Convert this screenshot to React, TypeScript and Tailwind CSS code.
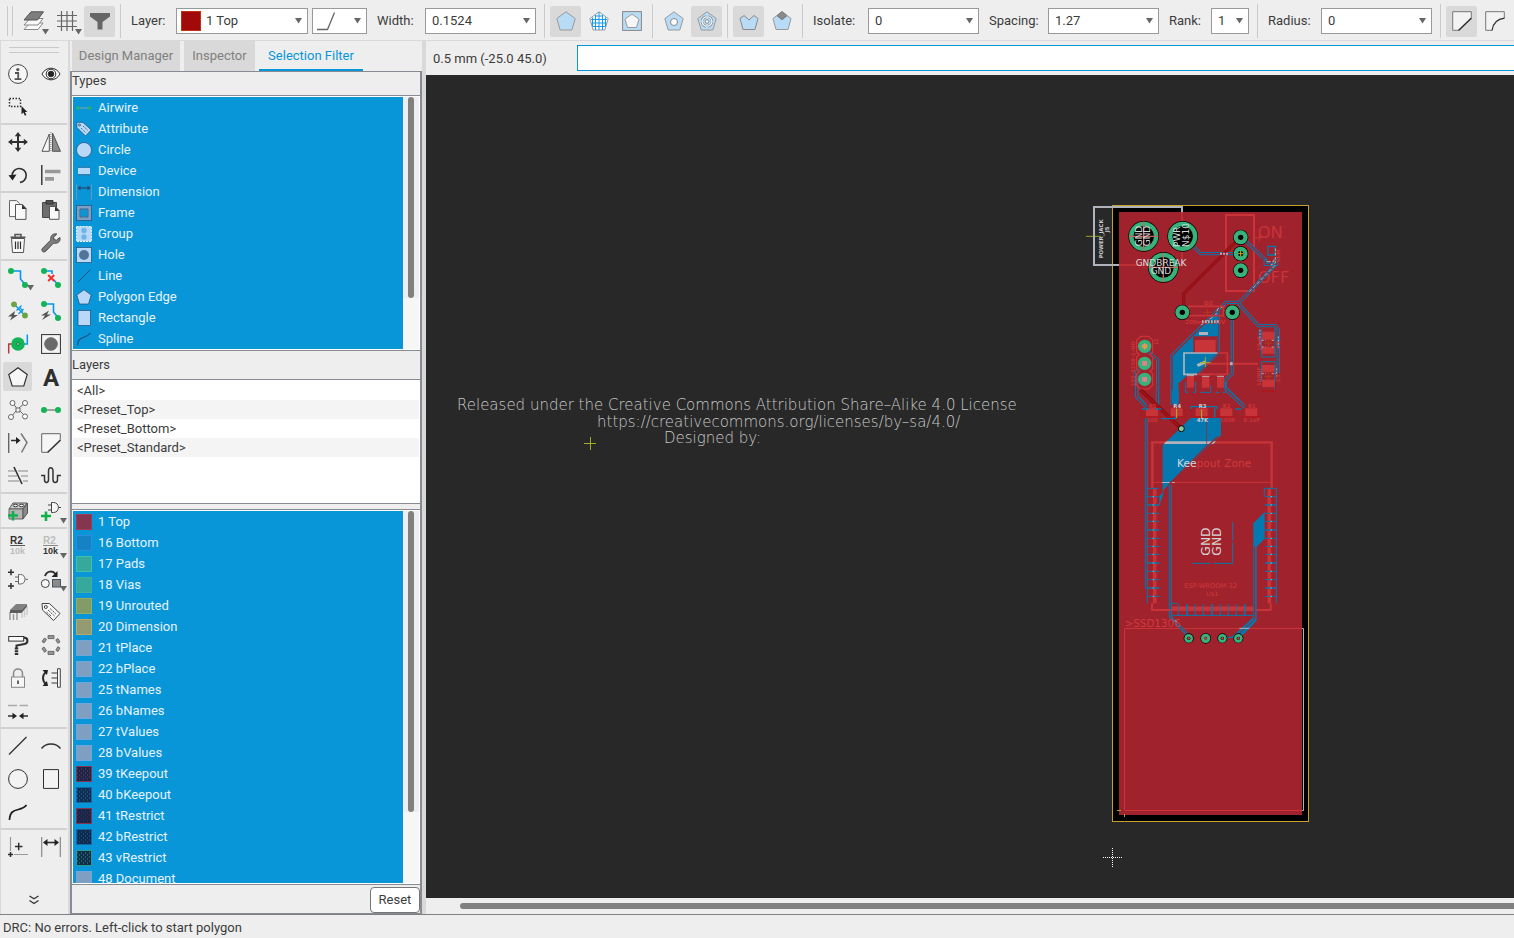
import type { ReactNode } from "react";

const GREEN = "#12b455";
const BLUE = "#0696ee";
const DARK = "#2f2f2f";

function Ico({ children, size = 20 }: { children: ReactNode; size?: number }) {
  return (
    <svg
      width={size}
      height={size}
      viewBox={`0 0 ${size} ${size}`}
      fill="none"
      stroke={DARK}
      className="overflow-visible"
      aria-hidden="true"
    >
      {children}
    </svg>
  );
}

function Arrow() {
  return (
    <svg width="7" height="6" viewBox="0 0 7 6" aria-hidden="true">
      <path d="M0 0h7L3.5 5.5z" fill="#666" />
    </svg>
  );
}

const pentagon = "M10 .8 19.2 7.6 15.8 19H4.2L.8 7.6z";
const tag = "M1 1.5 1.5 8 12.5 18.5 19 11.5 8.5 1.5z";

/* ---------- Toolbox icons ---------- */

const icons: Record<string, ReactNode> = {
  Info: (
    <>
      <circle cx="10" cy="10" r="9.4" fill="#f6f6f6" stroke="#444" />
      <circle cx="9.8" cy="5.6" r="1.6" fill="#555" stroke="none" />
      <path d="M7 9h3.2v6M6.6 15.2h6.8" stroke="#555" strokeWidth="1.8" />
    </>
  ),
  Show: (
    <>
      <path d="M1 10C5 2.2 15 2.2 19 10C15 17.8 5 17.8 1 10z" fill="#fafafa" />
      <circle cx="10" cy="10" r="4.8" />
      <circle cx="10" cy="10" r="2.8" fill="#222" />
    </>
  ),
  "Select area": (
    <>
      <rect x="1.5" y="1.5" width="11" height="8" strokeWidth="1.5" strokeDasharray="1.5 1.5" />
      <path d="M13.5 9v8.2l1.9-1.8 1.5 3.4 1.5-.8-1.5-3h2.4z" fill="#222" stroke="none" />
    </>
  ),
  Move: (
    <>
      <path d="M10 2v16M2 10h16" strokeWidth="2" />
      <path d="M10 0l3.2 4.2H6.8zM10 20l3.2-4.2H6.8zM0 10l4.2-3.2v6.4zM20 10l-4.2-3.2v6.4z" fill={DARK} stroke="none" />
    </>
  ),
  Mirror: (
    <>
      <path d="M8.3 2v17.3H1z" fill="#f6f6f6" stroke="#555" />
      <path d="M11.5 1v18.3h8z" fill="#8a8a8a" stroke="#555" />
      <path d="M9.9 0v20" stroke="#777" strokeDasharray="1 1" />
    </>
  ),
  Rotate: (
    <>
      <path d="M4.2 10.5A7 7 0 1 1 12 17.4" strokeWidth="1.6" />
      <path d="M0.5 10.2l8-.6-4 6z" fill="#222" stroke="none" />
    </>
  ),
  Align: (
    <>
      <path d="M.8 0v20" strokeWidth="1.4" />
      <path d="M4 4.7h15.5v3.6H4zM4 12h9v3.8H4z" fill="#999" stroke="none" />
    </>
  ),
  Copy: (
    <>
      <path d="M1.5.6h7l3 3v13h-10z" fill="#f8f8f8" stroke="#666" />
      <path d="M7.5 4.5h7l3.5 4v10.9H7.5z" fill="#f8f8f8" stroke="#555" />
      <path d="M14 4.5v4.5h4.5z" fill="#333" stroke="none" />
    </>
  ),
  Paste: (
    <>
      <path d="M1.5 2.5h14v15h-14z" fill="#6e6e6e" stroke="#4a4a4a" />
      <path d="M5 .6h7v3.4H5z" fill="#555" stroke="#333" />
      <path d="M8.5 6.5h6l3.5 4v8.8H8.5z" fill="#f8f8f8" stroke="#555" />
      <path d="M14 6.5v4.5h4.5z" fill="#333" stroke="none" />
    </>
  ),
  Delete: (
    <>
      <path d="M3.5 5.5h13l-1 14h-11z" fill="#f8f8f8" stroke="#555" />
      <path d="M2.5 4.3h15M7 4V1.6h6V4" strokeWidth="1.5" stroke="#555" />
      <path d="M7.5 8.5V16M10 8.5V16M12.5 8.5V16" strokeWidth="1.2" />
    </>
  ),
  Properties: (
    <path
      d="M18.8 4.4 15.5 7.2 13 6.6 12.6 4.2 15.8 1C13 .2 9.600 2 9.700 5.600 9.700 6.400 9.700 7 9.400 7.400L1.600 15.200C-.4 17.400 2.400 20.400 4.700 18.200L12.200 10.500C13 10 14 10.300 15 10.200 18.200 9.800 19.800 7 18.800 4.400z"
      fill="#7d7d7d"
      stroke="#4a4a4a"
    />
  ),
  "Route airwire": (
    <>
      <path d="M3 3h9.500v8l5 6" stroke={BLUE} strokeWidth="1.600" />
      <circle cx="3" cy="3" r="3" fill={GREEN} stroke="none" />
      <circle cx="17" cy="17" r="3" fill={GREEN} stroke="none" />
    </>
  ),
  Ripup: (
    <>
      <path d="M3 3h8v3M13 12l4 5" stroke={BLUE} strokeWidth="1.600" />
      <path d="M7.200 7l6 6M13.200 7l-6 6" stroke="#f22c2c" strokeWidth="2" />
      <circle cx="3" cy="3" r="3" fill={GREEN} stroke="none" />
      <circle cx="17" cy="17" r="3" fill={GREEN} stroke="none" />
    </>
  ),
  Fanout: (
    <>
      <path d="M6 3l3.500 3.500M13.500 11l3 3M8.500 9.500l5-5M10.500 13l5-5M9 6l3.500 4M12 6.500l3 4" stroke={BLUE} strokeWidth="1.200" />
      <circle cx="6" cy="3.300" r="2.900" fill="#6aa343" stroke="none" />
      <circle cx="17" cy="14.500" r="2.900" fill="#6aa343" stroke="none" />
      <path d="M7 10 0 15.500h4L2 19.500l8-5.500H6z" fill="#555" stroke="none" />
    </>
  ),
  "Quick route": (
    <>
      <path d="M3 3h9.500v8l5 6" stroke={BLUE} strokeWidth="1.600" />
      <circle cx="3" cy="3" r="3" fill={GREEN} stroke="none" />
      <circle cx="17" cy="17" r="3" fill={GREEN} stroke="none" />
      <path d="M8 9.500 0 14.500h4L1 19l9-5.500H6z" fill="#555" stroke="none" />
    </>
  ),
  Via: (
    <>
      <path d="M.7 19.500V10H5" stroke="#c4343c" strokeWidth="1.500" />
      <path d="M19.300.5V10H15" stroke={BLUE} strokeWidth="1.500" />
      <circle cx="10" cy="10" r="6.800" fill={GREEN} stroke="none" />
      <circle cx="10" cy="10" r="1.300" fill="#fff" stroke="#0a7c39" />
    </>
  ),
  Hole: (
    <>
      <rect x=".6" y=".6" width="18.800" height="18.800" fill="#f3f3f3" />
      <circle cx="10" cy="10" r="6.300" fill="#6a6a6a" stroke="#6a6a6a" />
    </>
  ),
  Polygon: <path d={pentagon} fill="#f6f6f6" strokeWidth="1.200" />,
  Text: (
    <text x="10" y="18.500" textAnchor="middle" fontFamily="Roboto, sans-serif" fontWeight="700" fontSize="24" fill={DARK} stroke="none">
      A
    </text>
  ),
  Ratsnest: (
    <g stroke="#666">
      <path d="M5 3l4 6M17 3l-6 5M3 17l5-6M17 16l-5-5" />
      <path d="M8 8h4v4H8z" fill="#f6f6f6" />
      <circle cx="4.500" cy="3" r="2.500" fill="#fff" />
      <circle cx="17" cy="3" r="2.500" fill="#fff" />
      <circle cx="3" cy="17" r="2.500" fill="#fff" />
      <circle cx="17" cy="16.500" r="2.500" fill="#fff" />
    </g>
  ),
  Signal: (
    <>
      <path d="M3 10h14" stroke="#888" strokeWidth="1.500" />
      <circle cx="3" cy="10" r="3" fill={GREEN} stroke="none" />
      <circle cx="17" cy="10" r="3" fill={GREEN} stroke="none" />
    </>
  ),
  Split: (
    <>
      <path d="M.7 0v20" stroke="#666" strokeWidth="1.400" />
      <path d="M3 7.500h6" strokeWidth="1.500" />
      <path d="M8 4l4.500 3.500L8 11z" fill="#222" stroke="none" />
      <path d="M13 .5l6 9-5.500 10" stroke="#777" strokeWidth="1.500" />
    </>
  ),
  Miter: (
    <>
      <path d="M6.500 19.300H.7V.7h18.600v6" fill="#f6f6f6" stroke="#666" />
      <path d="M6.500 19.500 19.500 7" strokeWidth="1.600" />
    </>
  ),
  Optimize: (
    <>
      <path d="M0 5h7M10 5h10M0 10h9M13 10h7M0 15h11M15 15h5" stroke="#aaa" strokeWidth="1.300" />
      <path d="M6 1l8 17" strokeWidth="1.600" />
    </>
  ),
  Meander: <path d="M0 9.500h3.500v4c0 4 4 4 4 0v-8c0-5 4.500-5 4.500 0v8c0 4 4.500 4 4.500 0v-4H20" stroke="#333" strokeWidth="1.500" />,
  "Add part": (
    <>
      <path d="M1 8 5 2h14l-4 6z" fill="#ccc" stroke="#555" />
      <path d="M1 8h14v10H1z" fill="#b4b4b4" stroke="#666" />
      <path d="M15 8l4.500-6v10L15 18z" fill="#8a8a8a" stroke="#555" />
      <ellipse cx="7.500" cy="4.500" rx="2.300" ry="1.300" fill="#eee" />
      <ellipse cx="13.500" cy="4.500" rx="2.300" ry="1.300" fill="#eee" />
      <path d="M0 14.500h10M5 10v9.500" stroke="#12b04a" strokeWidth="2.600" />
    </>
  ),
  "Add gate": (
    <>
      <path d="M10.500 1.500h2c6.500 0 6.500 10 0 10h-2z" fill="#f6f6f6" stroke="#444" />
      <path d="M7 4h3.500M7 9h3.500M17.500 6.500H20" stroke="#444" />
      <path d="M0 15h10M5 10.500V20" stroke="#12b04a" strokeWidth="2.600" />
    </>
  ),
  Name: (
    <>
      <text x="2" y="7.500" fontFamily="Liberation Sans, sans-serif" fontWeight="700" fontSize="10" fill="#333" stroke="none">
        R2
      </text>
      <text x="2" y="18" fontFamily="Liberation Sans, sans-serif" fontWeight="700" fontSize="9" fill="#bdbdbd" stroke="none">
        10k
      </text>
      <path d="M2 9.500h15" stroke="#555" />
    </>
  ),
  Value: (
    <>
      <text x="2" y="7.500" fontFamily="Liberation Sans, sans-serif" fontWeight="700" fontSize="10" fill="#bdbdbd" stroke="none">
        R2
      </text>
      <text x="2" y="18" fontFamily="Liberation Sans, sans-serif" fontWeight="700" fontSize="9" fill="#333" stroke="none">
        10k
      </text>
      <path d="M2 9.500h15" stroke="#888" />
    </>
  ),
  "Invoke gate": (
    <>
      <path d="M10.500 5.500h2c6 0 6 9.500 0 9.500h-2z" fill="#f6f6f6" stroke="#666" />
      <path d="M7 8h3.500M7 12.500h3.500M17.500 10.300H20" stroke="#666" />
      <path d="M0 3.200h6M3 .2v6M0 17h6M3 14v6" strokeWidth="1.500" />
    </>
  ),
  Replace: (
    <>
      <path d="M4 7C6 1.500 12 1.500 14.500 5" strokeWidth="2" />
      <path d="M16.500 2v6h-6z" fill="#222" stroke="none" />
      <circle cx="4.300" cy="14.500" r="4" fill="#f6f6f6" stroke="#444" />
      <rect x="11.500" y="10.500" width="8" height="7.500" fill="#8a8a8a" stroke="#456" />
    </>
  ),
  Package: (
    <>
      <path d="M2 10v8M5.500 12v6M9 10v8" stroke="#999" strokeWidth="1.500" />
      <path d="M14 7v9M16.500 5v10M19 4v9" stroke="#ccc" strokeWidth="1.500" />
      <path d="M2 8 8 2h11l-5.500 6z" fill="#808080" stroke="none" />
      <path d="M2 8h11.500L19 2v2.500L13.500 11H2z" fill="#5c5c5c" stroke="none" />
    </>
  ),
  Attribute: (
    <>
      <path d={tag} fill="#f8f8f8" stroke="#444" />
      <circle cx="4.800" cy="5" r="1.500" stroke="#444" />
      <path d="M9 6.500l6 5.500M7 8l6.500 6M5.500 10l5 4.500" stroke="#555" strokeDasharray="2.500 1" />
    </>
  ),
  "Paint roller": (
    <>
      <rect x=".7" y="1.500" width="15" height="4.600" fill="#fafafa" stroke="#333" />
      <path d="M16 2.500c5 .5 4 6 .5 6.500L8.500 10.500V13" strokeWidth="2" />
      <path d="M8.500 12.500V20" strokeWidth="3.400" strokeDasharray="2 .7" />
    </>
  ),
  Panelize: (
    <g fill="#999" stroke="#555" strokeWidth=".8">
      <path d="M7 .6h6v3H7zM7 16.400h6v3H7z" />
      <path d="M1 6.500 3.500 3l2 1.500L3 8zM17 3.500 19 7l-2.200 1.300-2-3.400zM1 13.500l2.500 3.800 2-1.500L3 12zM17 16.500l2-3.500-2.200-1.300-2 3.500z" />
    </g>
  ),
  Lock: (
    <>
      <path d="M5.500 9V5.500c0-6 9-6 9 0V9" stroke="#888" strokeWidth="1.500" />
      <rect x="3.500" y="9" width="13" height="10.300" fill="#f6f6f6" stroke="#888" />
      <path d="M10 12.500v3.500" strokeWidth="2" stroke="#666" />
    </>
  ),
  "Swap pins": (
    <>
      <path d="M5 4C1 7 1 13 5 16" strokeWidth="2" />
      <path d="M1.500 2h5.500l-1 5zM1.500 18H7l-1-5z" fill="#222" stroke="none" />
      <path d="M10.500 5h5.500M10.500 10h5.500M10.500 15h5.500" stroke="#777" strokeWidth="1.400" />
      <path d="M16.500.7h2.800v18.600h-2.800z" fill="#f6f6f6" stroke="#444" />
    </>
  ),
  Gap: (
    <>
      <path d="M0 4.500h9M11.500 4.500H20" stroke="#aaa" strokeWidth="1.600" />
      <path d="M0 15h6M14 15h6" strokeWidth="1.600" />
      <path d="M4.500 11.800 9 15l-4.500 3.200zM15.500 11.800 11 15l4.500 3.200z" fill="#222" stroke="none" />
    </>
  ),
  Line: <path d="M1 18.500 18.500 1" strokeWidth="1.300" />,
  Arc: <path d="M.5 12.500C5 6.500 15 6.500 19.500 12.500" strokeWidth="1.300" />,
  Circle: <circle cx="10" cy="10" r="9.400" fill="#f3f3f3" />,
  Rectangle: <path d="M2.500.6h15v18.800h-15z" fill="#f3f3f3" />,
  Spline: <path d="M1.500 18C2 4 13 10.500 18.500 3" strokeWidth="1.700" stroke="#1c1c1c" />,
  Mark: (
    <>
      <path d="M2.500 0v14M6 17.500h14" stroke="#999" strokeWidth="1.200" />
      <path d="M7 9.500h7.500M10.700 5.800v7.500M0 17.500h5M2.500 15v5" strokeWidth="1.500" />
    </>
  ),
  Dimension: (
    <>
      <path d="M.7 0v20M19.300 0v20" stroke="#888" strokeWidth="1.200" />
      <path d="M4 5.500h12" strokeWidth="1.600" />
      <path d="M6.500 2v7L2 5.500zM13.500 2v7L18 5.500z" fill="#222" stroke="none" />
    </>
  ),
};

const toolGroups: string[][] = [
  ["Info", "Show", "Select area", ""],
  ["Move", "Mirror", "Rotate", "Align"],
  ["Copy", "Paste", "Delete", "Properties"],
  [
    "Route airwire", "Ripup", "Fanout", "Quick route", "Via", "Hole", "Polygon", "Text",
    "Ratsnest", "Signal", "Split", "Miter", "Optimize", "Meander",
  ],
  ["Add part", "Add gate"],
  ["Name", "Value", "Invoke gate", "Replace", "Package", "Attribute", "Paint roller", "Panelize", "Lock", "Swap pins", "Gap", ""],
  ["Line", "Arc", "Circle", "Rectangle", "Spline", ""],
  ["Mark", "Dimension"],
];
const withMenu = ["Route airwire", "Add gate", "Value", "Replace"];

function Toolbox() {
  return (
    <aside className="flex w-[70px] shrink-0 flex-col border-r-2 border-l border-[#d9d9d9] pt-[6px] pr-px" aria-label="Tools">
      <div className="mx-[8px] mb-[4px] h-[6px] border-y border-[#c9c9c9]" />
      {toolGroups.map((group, gi) => (
        <div
          key={gi}
          className={`grid grid-cols-2 ${gi > 0 ? "border-t-2 border-[#d2d2d2]" : ""}`}
        >
          {group.map((name, i) =>
            name === "" ? (
              <span key={i} />
            ) : (
              <button
                key={name}
                type="button"
                aria-label={name}
                className="relative flex h-[33px] items-center justify-center"
              >
                <span
                  className={`flex size-[29px] items-center justify-center rounded-xs ${name === "Polygon" ? "bg-[#d9d9d9]" : ""}`}
                >
                  <Ico>{icons[name]}</Ico>
                </span>
                {withMenu.includes(name) && (
                  <span className="absolute right-0 bottom-[3px]">
                    <Arrow />
                  </span>
                )}
              </button>
            ),
          )}
        </div>
      ))}
      <button type="button" aria-label="More tools" className="mt-auto mb-[9px] flex justify-center">
        <svg width="10" height="10" viewBox="0 0 10 10" fill="none" stroke="#333" strokeWidth="1.300" aria-hidden="true">
          <path d="M.5 1 5 3.800 9.500 1M.5 5.500 5 8.500 9.500 5.500" />
        </svg>
      </button>
    </aside>
  );
}

/* ---------- Top toolbar ---------- */

function ToolButton({ label, active, menu, children }: { label: string; active?: boolean; menu?: boolean; children: ReactNode }) {
  return (
    <button
      type="button"
      aria-label={label}
      className={`relative flex size-[31px] shrink-0 items-center justify-center rounded-xs ${active ? "bg-[#d9d9d9]" : ""}`}
    >
      {children}
      {menu && (
        <span className="absolute right-0 bottom-[2px]">
          <Arrow />
        </span>
      )}
    </button>
  );
}

function Sep() {
  return <span className="mx-[5px] h-[34px] w-px shrink-0 bg-[#cbcbcb]" />;
}

function Combo({ label, id, value, w, labelW }: { label: string; id: string; value: string; w: string; labelW: string }) {
  return (
    <div className="flex shrink-0 items-center">
      <label htmlFor={id} className={`shrink-0 ${labelW}`}>
        {label}
      </label>
      <span className={`relative flex h-[26px] items-center border border-[#999] bg-white ${w}`}>
        <select id={id} className="h-full w-full appearance-none bg-transparent pl-[6px] outline-none">
          <option>{value}</option>
        </select>
        <span className="pointer-events-none absolute right-[5px]">
          <Arrow />
        </span>
      </span>
    </div>
  );
}

const polyFill = "#b9dcf6";
const polyLine = "#999";

function TopBar() {
  return (
    <header className="flex h-[41px] shrink-0 items-center overflow-hidden border-b border-[#d9d9d9] pt-[2px] pl-[7px]">
      <span className="mr-[5px] h-[30px] w-[6px] shrink-0 border-x border-[#c9c9c9]" />
      <ToolButton label="Layers" menu>
        <Ico>
          <path d="M0 18.500 6 12h13l-5 6.500z" fill="#fafafa" stroke="#888" />
          <path d="M0 14 6 7.500h13L14 14z" fill="#fafafa" stroke="#888" />
          <path d="M0 9 7 .8h12.500L13.500 9z" fill="#7d7d7d" stroke="#555" />
        </Ico>
      </ToolButton>
      <span className="w-[2px] shrink-0" />
      <ToolButton label="Grid" menu>
        <Ico>
          <path d="M4.500 0v20M10 0v20M15.500 0v20M0 4.500h20M0 10h20M0 15.500h20" stroke="#666" strokeWidth="1.200" />
        </Ico>
      </ToolButton>
      <span className="w-[2px] shrink-0" />
      <ToolButton label="Selection filter" active>
        <Ico>
          <path d="M0 2h20v3.500L12.500 11v7.500h-5V11L0 5.500z" fill="#666" stroke="none" />
        </Ico>
      </ToolButton>
      <Sep />
      <div className="ml-[5px] flex shrink-0 items-center">
        <label htmlFor="layer" className="w-[45px]">
          Layer:
        </label>
        <span className="relative flex h-[26px] w-[132px] items-center border border-[#999] bg-white">
          <span className="ml-[4px] size-[20px] shrink-0 border border-[#c23010] bg-[#a00a0a]" />
          <select id="layer" className="h-full w-full appearance-none bg-transparent pl-[5px] outline-none">
            <option>1 Top</option>
          </select>
          <span className="pointer-events-none absolute right-[5px]">
            <Arrow />
          </span>
        </span>
      </div>
      <span className="relative mr-[10px] ml-[4px] flex h-[26px] w-[55px] shrink-0 items-center border border-[#999] bg-white">
        <svg width="19" height="19" viewBox="0 0 19 19" fill="none" stroke="#666" strokeWidth="1.300" className="ml-[4px]" aria-hidden="true">
          <path d="M0 17.500h10.500L17.500.5" />
        </svg>
        <select aria-label="Wire bend" className="absolute inset-0 appearance-none bg-transparent text-transparent outline-none">
          <option></option>
        </select>
        <span className="pointer-events-none absolute right-[5px]">
          <Arrow />
        </span>
      </span>
      <Combo label="Width:" id="width" value="0.1524" w="w-[111px]" labelW="w-[48px]" />
      <span className="w-[3px] shrink-0" />
      <Sep />
      <div className="flex shrink-0 gap-[2px]">
        <ToolButton label="Solid fill" active>
          <Ico>
            <path d={pentagon} fill={polyFill} stroke={polyLine} />
          </Ico>
        </ToolButton>
        <ToolButton label="Hatch fill">
          <Ico>
            <path d={pentagon} fill="#fff" stroke={polyLine} />
            <path
              d="M10 1v18M6.500 4v15M3.500 6.500v9M13.500 4v15M16.500 6.500v9M6 5h8M2 8.500h16M2.500 12h15M4 15.500h12"
              stroke="#129bf0"
            />
          </Ico>
        </ToolButton>
        <ToolButton label="Cutout">
          <Ico>
            <rect x=".6" y=".6" width="18.800" height="18.800" fill={polyFill} stroke="#888" />
            <path d="M10 3 17 8.200 14.500 16.500h-9L3 8.200z" fill="#f6f6f6" stroke={polyLine} />
          </Ico>
        </ToolButton>
      </div>
      <Sep />
      <div className="flex shrink-0 gap-[2px]">
        <ToolButton label="Thermals off">
          <Ico>
            <path d={pentagon} fill={polyFill} stroke={polyLine} />
            <circle cx="10" cy="11" r="3.500" fill="#fff" stroke="#888" />
          </Ico>
        </ToolButton>
        <ToolButton label="Thermals on" active>
          <Ico>
            <path d={pentagon} fill={polyFill} stroke={polyLine} />
            <circle cx="10" cy="10.500" r="4.800" stroke="#888" strokeWidth="2.800" />
            <circle cx="10" cy="10.500" r="4.800" stroke="#fff" strokeWidth="1.200" />
            <path d="M10 4v13M3.500 10.500h13" stroke={polyFill} strokeWidth="2" />
            <circle cx="10" cy="10.500" r="1.800" fill="#fff" stroke="#888" />
          </Ico>
        </ToolButton>
      </div>
      <Sep />
      <div className="flex shrink-0 gap-[2px]">
        <ToolButton label="Orphans off" active>
          <Ico>
            <path d="M1 7.500 5 4.500 10 9l5-4.500 4 3L16 18.500H4z" fill={polyFill} stroke="#888" />
          </Ico>
        </ToolButton>
        <ToolButton label="Orphans on">
          <Ico>
            <path d="M1 7.500 5 4.500 10 9l5-4.500 4 3L16 18.500H4z" fill={polyFill} stroke="#999" />
            <path d="M10 .5 15 4.500 10 8.500 5 4.500z" fill="#8a8a8a" stroke="#777" />
          </Ico>
        </ToolButton>
      </div>
      <Sep />
      <div className="ml-[5px] flex shrink-0 gap-[10px]">
        <Combo label="Isolate:" id="isolate" value="0" w="w-[111px]" labelW="w-[55px]" />
        <Combo label="Spacing:" id="spacing" value="1.27" w="w-[111px]" labelW="w-[59px]" />
        <Combo label="Rank:" id="rank" value="1" w="w-[38px]" labelW="w-[42px]" />
      </div>
      <span className="w-[3px] shrink-0" />
      <Sep />
      <span className="w-[5px] shrink-0" />
      <Combo label="Radius:" id="radius" value="0" w="w-[111px]" labelW="w-[53px]" />
      <span className="w-[3px] shrink-0" />
      <Sep />
      <div className="flex shrink-0 gap-[2px]">
        <ToolButton label="Straight miter" active>
          <Ico>
            <path d="M6.500 19.300H.7V.7h18.600v6" fill="#f3f3f3" stroke="#777" />
            <path d="M6.500 19.500 19.500 7" strokeWidth="1.600" />
          </Ico>
        </ToolButton>
        <ToolButton label="Round miter">
          <Ico>
            <path d="M7 19.300H.7V.7h18.600v6.500C12 8 8 12 7 19.300z" fill="#f3f3f3" stroke="none" />
            <path d="M7 19.300H.7V.7h18.600v6.500" stroke="#777" />
            <path d="M7 19.500C8 12 12 8 19.500 7.200" strokeWidth="1.300" />
          </Ico>
        </ToolButton>
      </div>
    </header>
  );
}

/* ---------- Selection filter panel ---------- */

const lb = "#b9d8f8";
const nv = "#1f4e79";

const types: [string, ReactNode][] = [
  ["Airwire", <><path d="M2 8h12" stroke="#7aa8b8" /><circle cx="2" cy="8" r="2" fill="#22b07a" stroke="none" /><circle cx="13.500" cy="8" r="2" fill="#22b07a" stroke="none" /></>],
  ["Attribute", <><path d="M.8 1.200 1 6.500 9.500 15 15.200 9 7 1.500z" fill={lb} stroke={nv} strokeWidth=".7" /><circle cx="3.500" cy="4" r="1" stroke={nv} strokeWidth=".8" /><path d="M7 5l5 4.500M5 7l5 5" stroke={nv} strokeWidth=".8" strokeDasharray="1.500 .8" /></>],
  ["Circle", <circle cx="8" cy="8" r="7.500" fill={lb} stroke={nv} strokeWidth=".7" />],
  ["Device", <><path d="M3.500 3v10M6.500 3v10M9.500 3v10M12.500 3v10" stroke="#4d6f96" strokeWidth="1.300" /><rect x="2" y="5" width="12" height="6" fill={lb} stroke="none" /></>],
  ["Dimension", <><path d="M.5.5v15M15.500.5v15" stroke="#6c93bd" /><path d="M2 4h12" stroke={nv} strokeWidth="1.300" /><path d="M4.500 1.500v5L1.500 4zM11.500 1.500v5l3-2.500z" fill={nv} stroke="none" /></>],
  ["Frame", <><rect x="2.500" y="2.500" width="11" height="11" stroke="#7e9fc4" strokeWidth="4" /><path d="M.5.5h15v15H.5zM4 4h8v8H4z" stroke={nv} strokeWidth=".7" /></>],
  ["Group", <><rect x=".6" y=".6" width="14.800" height="14.800" fill={lb} stroke="#fff" strokeDasharray="2 1" /><circle cx="8" cy="4.500" r="2.700" fill="#6fb4e8" stroke="none" /><circle cx="8" cy="11" r="2.700" fill="#6fb4e8" stroke="none" /></>],
  ["Hole", <><rect x=".5" y=".5" width="15" height="15" fill={lb} stroke={nv} strokeWidth=".7" /><circle cx="8" cy="8" r="5" fill="#507599" stroke="none" /></>],
  ["Line", <path d="M1.500 14.500 14.500 1.500" stroke={nv} />],
  ["Polygon Edge", <path d="M8 .8 15.200 6 12.500 15h-9L.8 6z" fill={lb} stroke={nv} strokeWidth=".7" />],
  ["Rectangle", <rect x="2" y=".5" width="12.500" height="15" fill={lb} stroke={nv} strokeWidth=".7" />],
  ["Spline", <path d="M1.500 14.500C2 4 9 9 14.500 2" stroke={nv} strokeWidth="1.200" />],
];

const presets = ["<All>", "<Preset_Top>", "<Preset_Bottom>", "<Preset_Standard>"];

const plain = "bg-[#7f9fc2] border-[#6fa8d8]";
const layers: [string, string, string?][] = [
  ["1 Top", "bg-[#843650] border-[#a03a55]"],
  ["16 Bottom", "bg-[#1682c6] border-[#2a8fd6]"],
  ["17 Pads", "bg-[#36a99c] border-[#3fc0a8]"],
  ["18 Vias", "bg-[#36a99c] border-[#3fb0a0]"],
  ["19 Unrouted", "bg-[#819c68] border-[#8fb060]"],
  ["20 Dimension", "bg-[#949a72] border-[#b0ac68]"],
  ["21 tPlace", plain],
  ["22 bPlace", plain],
  ["25 tNames", plain],
  ["26 bNames", plain],
  ["27 tValues", plain],
  ["28 bValues", plain],
  ["39 tKeepout", "bg-[#1a2748] border-[#843650]", "#843650"],
  ["40 bKeepout", "bg-[#122c50] border-[#126aa8]", "#1e7bc0"],
  ["41 tRestrict", "bg-[#15274a] border-[#843650]", "#5c2c4c"],
  ["42 bRestrict", "bg-[#10294c] border-[#126aa8]", "#1668a8"],
  ["43 vRestrict", "bg-[#122c4a] border-[#2a9c90]", "#2a9c90"],
  ["48 Document", plain],
];

function Scrollbar({ thumb }: { thumb: string }) {
  return (
    <div className="h-full w-[16px] shrink-0 bg-[#f6f6f6]">
      <div className={`bg-[#eee] ${thumb}`}>
        <div className="mx-auto h-full w-[6px] rounded-full bg-[#808080]" />
      </div>
    </div>
  );
}

function Panel() {
  return (
    <section className="flex w-[352px] shrink-0 flex-col">
      <div role="tablist" className="flex h-[30px] gap-[4px] pl-[2px] text-[#808080]">
        <button type="button" role="tab" aria-selected="false" className="w-[108px] bg-[#d9d9d9]">
          Design Manager
        </button>
        <button type="button" role="tab" aria-selected="false" className="w-[71px] bg-[#d9d9d9]">
          Inspector
        </button>
        <button type="button" role="tab" aria-selected="true" className="w-[104px] border-b-2 border-[#0696d7] pt-[2px] text-[#0696d7]">
          Selection Filter
        </button>
      </div>
      <div className="flex min-h-0 flex-1 flex-col border-x-2 border-y border-[#868b94]">
        <h2 className="h-[23px] shrink-0 leading-[18px]">Types</h2>
        <div className="flex h-[256px] shrink-0 border-y border-[#868b94] bg-white p-px">
          <ul role="listbox" aria-label="Types" aria-multiselectable="true" className="flex-1 bg-[#0896d8] text-[#e6f2fc]">
            {types.map(([name, icon]) => (
              <li key={name} role="option" aria-selected="true" className="flex h-[21px] items-center gap-[6px] pl-[3px]">
                <Ico size={16}>{icon}</Ico>
                {name}
              </li>
            ))}
          </ul>
          <Scrollbar thumb="h-[201px]" />
        </div>
        <h2 className="h-[28px] shrink-0 leading-[28px]">Layers</h2>
        <ul role="listbox" aria-label="Layer presets" className="h-[125px] shrink-0 border-y border-[#868b94] bg-white px-px pt-px">
          {presets.map((p) => (
            <li key={p} role="option" aria-selected="false" className="h-[19px] pl-[4px] leading-[19px] even:bg-[#f4f4f4]">
              {p}
            </li>
          ))}
        </ul>
        <div className="mt-[5px] flex min-h-0 flex-1 border-y border-[#868b94] bg-white p-px">
          <ul role="listbox" aria-label="Layers" aria-multiselectable="true" className="flex-1 overflow-hidden bg-[#0896d8] text-[#e6f2fc]">
            {layers.map(([name, cls, dot]) => (
              <li key={name} role="option" aria-selected="true" className="flex h-[21px] items-center gap-[6px] pl-[3px]">
                <span className={`size-[16px] border ${cls}`}>
                  {dot && (
                    <svg width="14" height="14" viewBox="0 0 14 14" fill="none" stroke={dot} aria-hidden="true">
                      <path d="M0 2h14M0 6h14M0 10h14" strokeDasharray="1 3" />
                      <path d="M2 4h14M2 8h14M2 12h12" strokeDasharray="1 3" />
                    </svg>
                  )}
                </span>
                {name}
              </li>
            ))}
          </ul>
          <Scrollbar thumb="h-[301px]" />
        </div>
        <div className="flex h-[28px] shrink-0 items-end justify-end">
          <button type="button" className="h-[26px] w-[50px] rounded-[4px] border border-[#777] bg-white">
            Reset
          </button>
        </div>
      </div>
    </section>
  );
}

/* ---------- Board drawing ---------- */

const RED = "#a0222c";
const HI = "#c83438";
const BL = "#0479b0";
const GY = "#b0b4ba";

function Track({ d, w = 10, c = BL, inner = 4 }: { d: string; w?: number; c?: string; inner?: number }) {
  return (
    <>
      <path d={d} stroke={c} strokeWidth={w} />
      <path d={d} stroke={RED} strokeWidth={inner} />
    </>
  );
}

function Pad({ x, y, r, hole }: { x: number; y: number; r: number; hole: number }) {
  return (
    <>
      <circle cx={x} cy={y} r={r + 2} fill="#000" />
      <circle cx={x} cy={y} r={r} fill="#37b27a" />
      <circle cx={x} cy={y} r={hole} fill="#000" />
    </>
  );
}

const sidePads = [320, 345, 370, 394, 420, 445, 469, 493, 519, 544, 569, 594, 619];
const bottomPads = [295, 321, 346, 370, 396, 421, 445, 469, 494];

function Board() {
  return (
    <svg
      width="1088"
      height="823"
      viewBox="426 75 1088 823"
      fill="none"
      fontFamily="DejaVu Sans, sans-serif"
      fontWeight="200"
      role="img"
      aria-label="Board layout"
      className="block shrink-0"
    >
      <g fill="#c8c8c8" fontSize="15">
        <text x="457" y="410">Released under the Creative Commons Attribution Share–Alike 4.0 License</text>
        <text x="597" y="427">https://creativecommons.org/licenses/by–sa/4.0/</text>
        <text x="664" y="443">Designed by:</text>
      </g>
      <path d="M584 443.500h12M590.500 437v13" stroke="#a0ac28" />

      <rect x="1112.500" y="205.500" width="196" height="616" fill="#000" stroke="#c4a030" />
      <rect x="1119" y="212" width="183" height="603" fill={RED} />

      {/* display outline */}
      <path d="M1302 628.500H1303.500V810.500H1302" stroke={GY} />
      <path d="M1302 628.500H1124.500V810.500H1302" stroke={HI} />
      <path d="M1117 810.500h4M1124.500 814v3" stroke="#a0ac28" />

      {/* upper half */}
      <g transform="translate(1080 195) scale(.33333)" strokeWidth="3">
        <path d="M18 124H64M42 98V150" stroke="#93a024" />
        <path d="M117 210H42V36H306V52" stroke={GY} strokeWidth="6" />
        <path d="M306 52V210H117" stroke={HI} strokeWidth="4" />
        <rect x="438" y="60" width="84" height="228" stroke={HI} strokeWidth="6" />
        <g fill={HI} fontSize="49" fontWeight="400">
          <text x="533" y="130">ON</text>
          <text x="533" y="264">OFF</text>
        </g>
        <path d="M526 128h24M538 116v24" stroke={HI} />

        <path d="M276 482 438 324 418 345V475L352 540H320L294 565V630H276z" fill={BL} />
        <Track d="M335 148 362 176H465" />
        <Track d="M497 138 556 194V208H590V188" />
        <path d="M564 154h22v26h-22zM560 190l-8 8" stroke={BL} strokeWidth="4" />
        <Track d="M588 208 478 322H438L276 482V630" />
        <Track d="M457 370V535L436 556V578L488 630" />
        <Track d="M476 326 535 392H585L595 404V535" />
        <path d="M418 345V475L352 540" stroke={RED} strokeWidth="7" />
        <path d="M418 345V475L352 540" stroke={BL} strokeWidth="3" />
        <path d="M294 630V565L322 540" stroke={BL} />
        <Track d="M205 470 233 494V630" />
        <Track d="M180 520 170 530V604L196 630" />
        <path d="M472 136 311 296V336" stroke="#851218" strokeWidth="10" />
        <path d="M472 136 311 296V336" stroke="#ac1014" strokeWidth="4" />
        <path d="M182 582 232 630" stroke="#851218" strokeWidth="8" />
        <path d="M586 210 508 290M560 200h22v-10M433 334l-20 8-6 18-44 30" stroke={GY} strokeDasharray="12 5" />
        <path d="M586 160v44l-14 6" stroke={GY} strokeDasharray="8 5" />
        <path d="M420 176h24" stroke="#d8a0a8" strokeWidth="6" strokeDasharray="6 3" />

        <path d="M326 334H430V362H326z" stroke={HI} strokeWidth="5" />
        <g fill={HI} stroke="none" fontSize="17" fontWeight="700">
          <text x="372" y="331">D2</text>
          <text x="315" y="387">200mA/100V</text>
        </g>
        <path d="M366 380h52" stroke={GY} strokeWidth="8" strokeDasharray="5 4" />
        <path d="M382 342v24M370 352h24" stroke="#bb3420" />

        <rect x="340" y="424" width="73" height="50" fill={RED} />
        <rect x="345" y="435" width="62" height="37" fill={HI} />
        <rect x="357" y="411" width="27" height="9" fill={GY} />
        <path d="M412 474H442V538H400" stroke={HI} strokeWidth="5" />
        <path d="M412 474H312V538H352" stroke={GY} strokeWidth="5" />
        <path d="M400 538h-48M377 506H534" stroke={HI} strokeWidth="6" />
        <path d="M352 512 378 500" stroke={GY} strokeWidth="9" />
        <path d="M376 486v30M360 503h32" stroke="#a0ac28" />
        <path d="M450 506h8" stroke={GY} strokeWidth="9" />
        <g fill={HI}>
          <path d="M321 544h21v34h-21zM366 544h22v34h-22zM411 544h21v34h-21zM545 410h40v66h-40zM545 510h40v66h-40z" />
        </g>
        <path d="M545 434h40v22h-40zM545 532h40v22h-40z" fill={RED} />
        <path d="M321 542h21M366 544h22M411 544h21" stroke={GY} />
        <path d="M317 560v32h8M347 560v32h-8M362 592h30v-20M407 592h12M437 560v32h-8" stroke={BL} />
        <path d="M545 400V486H585V400M545 586V500H585V586M538 404V436M596 430V460" stroke={BL} />
        <path d="M545 436h12M575 436h10M545 456h12M575 456h10M540 404v50M595 424v40M545 536h12M575 536h12M590 520v28" stroke={GY} strokeDasharray="6 4" />
        <path d="M565 432v24M553 444h24M565 530v28M553 544h24" stroke="#b53a20" />
        <path d="M545 560V588H587V560" stroke="#b81014" />
        <g fill={HI} stroke="none" fontSize="16" fontWeight="700">
          <text transform="translate(543 468) rotate(-90)">10uF</text>
          <text transform="translate(600 460) rotate(-90)">C2</text>
          <text transform="translate(543 573) rotate(-90)">100NF</text>
          <text transform="translate(600 560) rotate(-90)">C1</text>
          <text transform="translate(600 202) rotate(-90)">SEM</text>
          <text transform="translate(234 448) rotate(-90)">J2</text>
          <text transform="translate(166 574) rotate(-90)">155-4258-1-ND</text>
        </g>
        <g fill="#c8ccd0" stroke="none" fontSize="16" fontWeight="700">
          <text transform="translate(69 190) rotate(-90)">POWER_JACK</text>
          <text transform="translate(86 112) rotate(-90)">J5</text>
        </g>

        <g stroke={HI} strokeWidth="4">
          <path d="M182 424h24l12 12v36l-8 6 8 8v36l-8 6 8 8v34l-12 12h-24l-12-12v-34l8-8-8-6v-36l8-8-8-6v-36z" />
        </g>
        <Pad x={191} y={124} r={44} hole={31} />
        <Pad x={308} y={124} r={44} hole={31} />
        <Pad x={250} y={217} r={44} hole={31} />
        <path d="M148 124h86M191 80v88M206 217h88M250 174v86" stroke="#c26a60" strokeWidth="4" />
        <Pad x={482} y={127} r={21} hole={8} />
        <Pad x={482} y={176} r={21} hole={8} />
        <Pad x={482} y={226} r={21} hole={8} />
        <Pad x={307} y={352} r={21} hole={8} />
        <Pad x={457} y={352} r={21} hole={8} />
        <g fill="#e4808a">
          <circle cx="194" cy="454" r="20" fill="#37b27a" />
          <circle cx="194" cy="505" r="20" fill="#37b27a" />
          <circle cx="194" cy="553" r="20" fill="#37b27a" />
          <path d="M187 447h14v14h-14zM187 498h14v14h-14zM187 546h14v14h-14z" />
        </g>
        <path d="M184 454h20M194 444v20M474 176h16M482 168v16" stroke="#d8b020" />
        <g fill="#d6dade" stroke="none" fontSize="27" fontWeight="400">
          <text transform="translate(185 154) rotate(-90)">GND</text>
          <text transform="translate(211 154) rotate(-90)">GND</text>
          <text transform="translate(300 156) rotate(-90)">PWR</text>
          <text transform="translate(326 156) rotate(-90)">N$10</text>
          <text x="167" y="213">GNDBREAK</text>
          <text x="212" y="237">GND</text>
        </g>
      </g>

      {/* lower half */}
      <g transform="translate(1080 390) scale(.33333)" strokeWidth="3">
        <path d="M213 157H575V295M217 154V295" stroke={HI} strokeWidth="7" />
        <path d="M217 277H572" stroke={HI} />
        <path d="M332 84H423V135L274 277 250 300V312L238 348V318L248 308V166z" fill={BL} />
        <path d="M252 160l8-6H408l-8 8H254zM246 276h38v3h-38z" fill={GY} />
        <path d="M380 84V166L262 288V325L240 346" stroke={RED} strokeWidth="2" />
        <path d="M412 140 268 282" stroke={RED} strokeWidth="4" />
        <path d="M294 40V0M278 40V0" stroke={BL} strokeWidth="5" />
        <Track d="M199 84V596" w={9} inner={3} />
        <Track d="M271 284V680L322 734" w={9} inner={3} />
        <Track d="M170 0V20L200 52" />
        <Track d="M232 0V44" />
        <Track d="M440 0 494 52" />
        <path d="M182 0 300 112" stroke="#7d0d12" strokeWidth="10" />
        <path d="M182 0 300 112" stroke="#b01014" strokeWidth="5" />
        <g fill={HI}>
          <path d="M198 55h36v26h-36zM272 55h36v26h-36zM347 55h36v26h-36zM421 55h36v26h-36zM496 55h36v26h-36z" />
        </g>
        <path d="M186 58v22h58M260 80h56V58M335 58v22h58M410 58v22h56M485 80h58" stroke="#b81418" />
        <path d="M186 57h20M226 57h18M334 57V50H410V57M404 54v28M244 86h42V80M466 57h18" stroke={BL} strokeWidth="4" />
        <path d="M290 56v28M365 58v26" stroke="#9ac030" />
        <g fill={HI} stroke="none" fontSize="16" fontWeight="700">
          <text x="206" y="54">R5</text>
          <text x="200" y="96">10K</text>
          <text x="428" y="54">R2</text>
          <text x="420" y="96">160R</text>
          <text x="504" y="54">R1</text>
          <text x="490" y="96">0.1uF</text>
        </g>
        <g fill="#c8ccd0" stroke="none" fontSize="16" fontWeight="700">
          <text x="280" y="54">R4</text>
          <text x="356" y="54">R3</text>
          <text x="350" y="96">47K</text>
        </g>
        <circle cx="304" cy="116" r="9" fill="#8cc8a0" stroke="#000" />

        <text x="291" y="230" fill="#d03a3e" stroke="none" fontSize="32" fontWeight="400">
          <tspan fill="#d4dade">Kee</tspan>pout Zone
        </text>

        <path d="M224 295V640M568 295V640" stroke={HI} strokeWidth="11" />
        <path d="M216 640V660H572V640" stroke={HI} strokeWidth="6" />
        <path d="M274 656H520" stroke={HI} strokeWidth="13" />
        <path d="M202 295h34M202 295v30M553 295h36M553 295v24M589 295V640M202 594v46" stroke={BL} />
        {sidePads.map((y) => (
          <path key={y} d={`M202 ${y}h36M555 ${y}h34`} stroke={BL} strokeWidth={y === 345 || y === 420 || y === 519 || y === 594 ? 5 : 3} />
        ))}
        {sidePads.map((y) => (
          <path key={y} d={`M218 ${y}h4M572 ${y}h4`} stroke={GY} />
        ))}
        <path d="M274 676H520M274 640h18M274 640v36" stroke={BL} />
        {bottomPads.map((x) => (
          <path key={x} d={`M${x} 642v34`} stroke={BL} strokeWidth={x === 321 || x === 396 || x === 494 ? 5 : 3} />
        ))}
        <path d="M554 366V446L530 470V692L492 732 474 744H442V740H456L520 682V400z" fill={BL} />
        <path d="M524 470V688L466 742" stroke={RED} strokeWidth="3" />
        <path d="M458 396V452M458 457V520H400M392 520H336" stroke={BL} />
        <path d="M372 457h44M396 440v34" stroke="#b53a20" />
        <g fill="#d8d4d6" stroke="none" fontSize="37" fontWeight="400">
          <text transform="translate(389 497) rotate(-90)">GND</text>
          <text transform="translate(422 497) rotate(-90)">GND</text>
        </g>
        <g fill="#d03a3e" stroke="none" fontWeight="400">
          <text x="313" y="594" fontSize="20">ESP-WROOM-32</text>
          <text x="379" y="618" fontSize="18">U$1</text>
          <text x="134" y="710" fontSize="31">&gt;SSD1306</text>
        </g>
        <path d="M478 715h30M284 690l6 6" stroke={GY} />
        <Pad x={326} y={745} r={13} hole={5} />
        <Pad x={377} y={745} r={14} hole={4} />
        <Pad x={427} y={745} r={13} hole={5} />
        <Pad x={475} y={745} r={13} hole={5} />
        <path d="M322 745h8M326 741v8M371 745h12M377 739v12M423 745h8M427 741v8M471 745h8M475 741v8" stroke="#d0404a" />
      </g>

      <path d="M1103 857.500h19M1112.500 848v19" stroke="#fff" strokeDasharray="1 1" />
    </svg>
  );
}

export default function App() {
  return (
    <div className="flex h-screen flex-col overflow-hidden bg-[#eee] font-[Roboto,'Noto_Sans',sans-serif] text-[13px] leading-[18px] text-[#3c3c3c]">
      <TopBar />
      <div className="flex min-h-0 flex-1">
        <Toolbox />
        <Panel />
        <div className="w-[4px] shrink-0 bg-[#d9d9d9]" />
        <main className="flex min-w-0 flex-1 flex-col">
          <div className="flex h-[34px] shrink-0 items-center pl-[7px]">
            <label htmlFor="command" className="w-[144px] shrink-0 pt-[2px]">
              0.5 mm (-25.0 45.0)
            </label>
            <input id="command" type="text" className="h-[26px] min-w-0 flex-1 border border-r-0 border-[#0696d7] bg-white px-[4px] outline-none" />
          </div>
          <div className="flex min-h-0 flex-1 overflow-hidden bg-[#282828]">
            <Board />
          </div>
          <div className="h-[16px] shrink-0 py-[5px] pl-[34px]">
            <div className="h-[6px] rounded-l-full bg-[#808080]" />
          </div>
        </main>
      </div>
      <footer className="flex h-[24px] shrink-0 items-center border-t border-[#808080] pt-[2px] pl-[3px]">
        DRC: No errors. Left-click to start polygon
      </footer>
    </div>
  );
}
